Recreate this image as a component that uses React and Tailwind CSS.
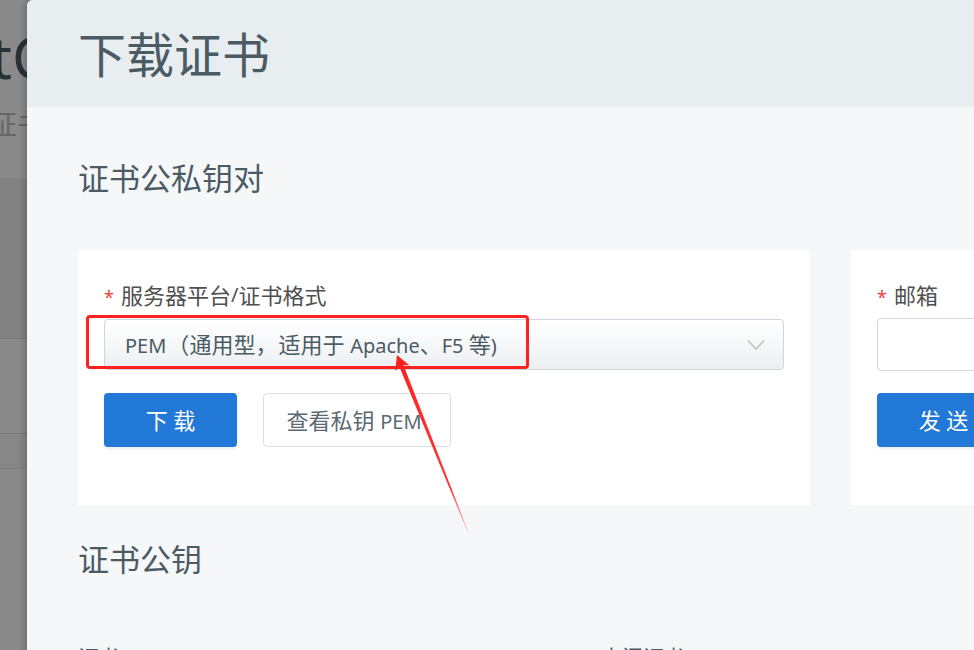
// Latin runs are set a bit smaller than the CJK text around them
function L({ children }) {
  return <span className="text-[20px]">{children}</span>;
}

function Label({ children }) {
  return (
    <div className="flex h-[28px] items-center text-[22px] leading-[28px] text-[#505050]">
      <span className="mr-[7px] mt-[3px] text-[18px] text-[#f04134]">*</span>
      {children}
    </div>
  );
}

function Chevron() {
  return (
    <svg width="18" height="12" viewBox="0 0 18 12" fill="none">
      <path d="M1 1.5 L9 10 L17 1.5" stroke="#bfc3c7" strokeWidth="1.6" />
    </svg>
  );
}

export default function App() {
  return (
    <div className="relative h-[650px] w-[974px] overflow-hidden bg-white font-['Noto_Sans','Noto_Sans_CJK_SC',sans-serif]">
      {/* page behind the dialog */}
      <div className="flex h-full flex-col bg-white">
        <div className="ml-[-9px] mt-[28px] whitespace-nowrap text-[58px] leading-[58px] text-[#465d68]">
          tCert
        </div>
        <div className="ml-[-11px] mt-[24px] whitespace-nowrap text-[28px] leading-[28px] text-[#bdbdbd]">
          证书管理
        </div>
        <div className="mt-[40px] h-[160px] bg-[#f1f1f1]" />
        <div className="h-[95px] border-t border-[#dcdcdc]" />
        <div className="h-[36px] border-y border-[#e2e2e2] bg-[#fafafa]" />
        <div className="flex-1" />
      </div>

      {/* backdrop */}
      <div className="absolute inset-0 bg-black/[0.46]" />

      {/* dialog */}
      <div className="absolute left-[27px] top-0 h-[720px] w-[1120px] overflow-hidden rounded-tl-[6px] bg-[#f5f7f9] shadow-[-3px_0_6px_rgba(0,0,0,0.18)]">
        <div className="flex h-[107px] items-center bg-[#e8edf0] px-[51px] pt-[3px]">
          <h1 className="text-[48px] leading-[56px] font-normal text-[#4b5b64]">下载证书</h1>
        </div>

        <div className="px-[51px]">
          <h2 className="pt-[51px] text-[31px] leading-[40px] text-[#4b5b64]">证书公私钥对</h2>

          <div className="mt-[52px] flex gap-[41px]">
            {/* key pair download */}
            <div className="h-[255px] w-[732px] shrink-0 bg-white px-[26px] pt-[31px]">
              <Label>
                服务器平台<L>/</L>证书格式
              </Label>
              <div className="mt-[10px] flex h-[51px] items-center justify-between rounded-[4px] border border-[#cfd5dc] bg-gradient-to-b from-white to-[#eceff2] pl-[20px] pr-[18px] text-[22px] text-[#4b5b64]">
                <span className="whitespace-nowrap">
                  <L>PEM</L>
                  <span className="inline-block w-[23px] text-right">（</span>通用型<span className="inline-block w-[23px]">，</span>适用于 <L>Apache</L>
                  <span className="inline-block w-[22px]">、</span>
                  <L>F5 </L>等<L>)</L>
                </span>
                <Chevron />
              </div>
              <div className="mt-[23px] flex gap-[26px]">
                <button className="h-[54px] w-[133px] rounded-[4px] bg-[#2278d7] text-[22px] text-white shadow-[0_2px_3px_rgba(0,0,0,0.08)]">
                  下 载
                </button>
                <button className="h-[54px] w-[188px] rounded-[4px] border border-[#dcdfe2] bg-white pr-[6px] text-[22px] text-[#5b6a72]">
                  查看私钥 <L>PEM</L>
                </button>
              </div>
            </div>

            {/* email */}
            <div className="h-[255px] w-[732px] shrink-0 bg-white px-[26px] pt-[31px]">
              <Label>邮箱</Label>
              <div className="mt-[9px] h-[53px] w-[400px] rounded-[4px] border border-[#d6d6d6] bg-white" />
              <div className="mt-[22px]">
                <button className="h-[54px] w-[133px] rounded-[4px] bg-[#2278d7] text-[22px] text-white shadow-[0_2px_3px_rgba(0,0,0,0.08)]">
                  发 送
                </button>
              </div>
            </div>
          </div>

          <h2 className="mt-[34px] text-[31px] leading-[40px] text-[#4b5b64]">证书公钥</h2>

          <div className="mt-[64px] grid grid-cols-[523px_1fr] text-[21px] leading-[28px] text-[#4b5b64]">
            <div>证书</div>
            <div>中间证书</div>
          </div>
        </div>
      </div>

      {/* annotation: red box */}
      <div className="pointer-events-none absolute left-[86px] top-[315px] h-[54px] w-[443px] rounded-[4px] border-[3px] border-[#ff2020]" />

      {/* annotation: arrow */}
      <svg className="pointer-events-none absolute inset-0" width="974" height="650" viewBox="0 0 974 650">
        <defs>
          <linearGradient id="arrowFade" x1="468" y1="532" x2="397" y2="355" gradientUnits="userSpaceOnUse">
            <stop offset="0" stopColor="#ff2020" stopOpacity="0.15" />
            <stop offset="0.25" stopColor="#ff2020" stopOpacity="0.9" />
            <stop offset="1" stopColor="#ff2020" />
          </linearGradient>
        </defs>
        <polygon
          fill="url(#arrowFade)"
          points="468.4,531.8 403.5,365.3 409.2,365.2 397,355 395.2,370.8 399.5,366.9 467.6,532.2"
        />
      </svg>
    </div>
  );
}
